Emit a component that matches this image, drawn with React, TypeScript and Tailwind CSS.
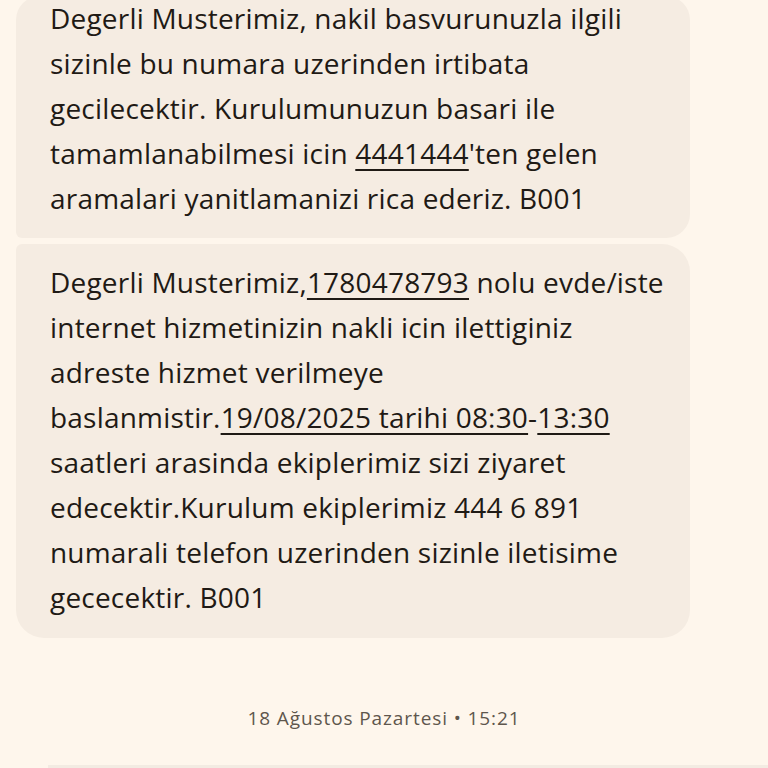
import React from 'react';

const font = { fontFamily: '"Open Sans", "Noto Sans", sans-serif' };

function Link({ children }: { children: React.ReactNode }) {
  return <span className="underline decoration-[2px] underline-offset-[5px]">{children}</span>;
}

function Bubble({ lines, className }: { lines: React.ReactNode[]; className: string }) {
  return (
    <div className={`bg-[#f5ece2] px-[34px] text-[28px] leading-[45px] tracking-[0.2px] ${className}`}>
      {lines.map((l, i) => (
        <div key={i} className="whitespace-nowrap">
          {l}
        </div>
      ))}
    </div>
  );
}

export default function App() {
  return (
    <div className="relative h-[768px] w-[768px] overflow-hidden bg-[#fef6ec] text-[#1f1a15]" style={font}>
      <div className="-mt-[4px] flex flex-col gap-[6px] pl-4 pr-[78px]">
        <Bubble
          className="rounded-[24px] rounded-bl-[6px] pb-[17px] pt-0"
          lines={[
            'Degerli Musterimiz, nakil basvurunuzla ilgili',
            'sizinle bu numara uzerinden irtibata',
            'gecilecektir. Kurulumunuzun basari ile',
            <>
              tamamlanabilmesi icin <Link>4441444</Link>'ten gelen
            </>,
            'aramalari yanitlamanizi rica ederiz. B001',
          ]}
        />
        <Bubble
          className="rounded-[28px] rounded-tl-[6px] pb-[18px] pt-[16px]"
          lines={[
            <>
              Degerli Musterimiz,<Link>1780478793</Link> nolu evde/iste
            </>,
            'internet hizmetinizin nakli icin ilettiginiz',
            'adreste hizmet verilmeye',
            <>
              baslanmistir.<Link>19/08/2025 tarihi 08:30</Link>-<Link>13:30</Link>
            </>,
            'saatleri arasinda ekiplerimiz sizi ziyaret',
            'edecektir.Kurulum ekiplerimiz 444 6 891',
            'numarali telefon uzerinden sizinle iletisime',
            'gececektir. B001',
          ]}
        />
      </div>

      <div className="mt-[66px] text-center text-[19px] tracking-[0.9px] text-[#5e564d]">
        18 Ağustos Pazartesi • 15:21
      </div>

      <div className="absolute bottom-0 left-[48px] right-0 h-[3px] bg-[#f3ebe2]" />
    </div>
  );
}
